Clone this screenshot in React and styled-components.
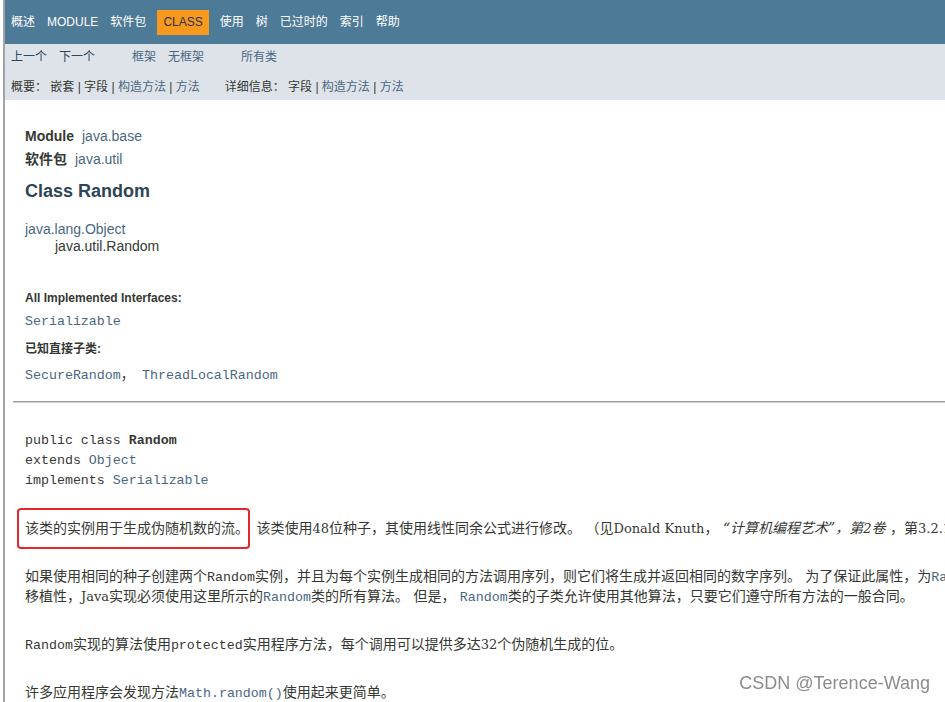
import styled, { createGlobalStyle } from 'styled-components'

const sans = `"Liberation Sans", "Noto Sans CJK SC", sans-serif`
const mono = `"Liberation Mono", "Noto Sans CJK SC", monospace`
const serif = `"DejaVu Serif", "Noto Sans CJK SC", serif`

const GlobalStyle = createGlobalStyle`
  html, body {
    margin: 0;
    padding: 0;
    background: #fff;
    overflow: hidden;
  }
  body {
    font-family: ${sans};
    color: #353833;
  }
`

// Frame + page edge
const Frame = styled.div`
  padding-left: 3px;
  width: 1400px;
  height: 702px;
`

const Page = styled.div`
  border-left: 2px solid #a3a3a3;
  height: 100%;
`

// Top bar
const TopNav = styled.ul`
  display: flex;
  align-items: center;
  margin: 0;
  padding: 10px 0 9px;
  list-style: none;
  background: #4d7a97;
`

const NavItem = styled.li`
  padding: 5px 6px;
  margin: ${p => (p.$active ? '0 5px' : '0')};
  font-size: 12px;
  line-height: 15px;
  color: ${p => (p.$active ? '#253441' : '#fff')};
  background: ${p => (p.$active ? '#f8981d' : 'transparent')};
`

// Sub bar
const SubNav = styled.div`
  background: #dee3e9;
  padding: 5px 0;
  display: flex;
  flex-direction: column;
  gap: 14px;
  font-size: 12px;
  line-height: 16px;
`

const SubRow = styled.div`
  display: flex;
  padding-left: ${p => (p.$inset ? '6px' : '0')};
  gap: ${p => (p.$inset ? '25px' : '0')};
`

const SubGroup = styled.div`
  display: flex;
  margin-right: 25px;
`

const SubLink = styled.span`
  padding: 0 6px;
  color: ${p => (p.$plain ? '#2c4557' : '#4a6782')};
`

const Summary = styled.div`
  white-space: pre;
  color: #353833;
`

const Link = styled.span`
  color: #4a6782;
`

// Content
const Content = styled.div`
  padding: 25px 0 0 8px;
`

const Inner = styled.div`
  padding-left: 12px;
`

const MetaLine = styled.div`
  font-size: 14px;
  line-height: 23px;
  display: flex;
  gap: 8px;
`

const MetaLabel = styled.b`
  color: #353833;
`

const Title = styled.h2`
  margin: 8px 0 0;
  font-size: 18px;
  line-height: 24px;
  color: #2c4557;
`

const Inherit = styled.div`
  margin-top: ${p => (p.$first ? '18px' : '0')};
  padding-left: ${p => (p.$child ? '30px' : '0')};
  font-size: 14px;
  line-height: 17px;
  color: ${p => (p.$child ? '#353833' : '#4a6782')};
`

const Term = styled.div`
  margin-top: ${p => p.$mt}px;
  font-size: 12px;
  font-weight: bold;
  line-height: 16px;
  color: #353833;
`

const Def = styled.div`
  margin-top: ${p => p.$mt}px;
  font-family: ${mono};
  font-size: 13.3px;
  line-height: 16px;
  color: #4a6782;
`

const Comma = styled.span`
  font-family: ${sans};
  color: #353833;
`

const Rule = styled.hr`
  margin: 17px 0 0;
  border: 0;
  border-top: 1px solid #9e9e9e;
  border-bottom: 1px solid #cfcfcf;
  height: 0;
`

const Signature = styled.pre`
  margin: 28px 0 0;
  font-family: ${mono};
  font-size: 13.3px;
  line-height: 20px;
  color: #353833;
`

const Block = styled.div`
  width: 1249px;
  font-family: ${serif};
  font-size: 14px;
  line-height: 20px;
  color: #353833;
`

const Para = styled.p`
  margin: ${p => (p.$first ? '27px' : '28px')} 0 0;
`

const Latin = styled.span`
  font-size: 13px;
  line-height: 1;
`

const Code = styled.code`
  font-family: ${mono};
  font-size: 13.3px;
  line-height: 1;
  color: ${p => (p.$link ? '#4a6782' : '#353833')};
`

const Highlight = styled.span`
  position: relative;
  margin-right: 3px;

  &::after {
    content: '';
    position: absolute;
    top: -12px;
    bottom: -13px;
    left: -8px;
    right: -1px;
    border: 2px solid #e5262b;
    border-radius: 4px;
  }
`

const Watermark = styled.div`
  position: fixed;
  right: 15px;
  bottom: 8px;
  font-family: ${sans};
  font-size: 18px;
  color: #8c8c8c;
  text-shadow: 0 0 2px #fff;
`

const navItems = ['概述', 'MODULE', '软件包', 'CLASS', '使用', '树', '已过时的', '索引', '帮助']

const App = () => {
  return (
    <>
      <GlobalStyle />
      <Frame>
        <Page>
          <TopNav>
            {navItems.map(item => (
              <NavItem key={item} $active={item === 'CLASS'}>
                {item}
              </NavItem>
            ))}
          </TopNav>

          <SubNav>
            <SubRow>
              <SubGroup>
                <SubLink $plain>上一个</SubLink>
                <SubLink $plain>下一个</SubLink>
              </SubGroup>
              <SubGroup>
                <SubLink>框架</SubLink>
                <SubLink>无框架</SubLink>
              </SubGroup>
              <SubGroup>
                <SubLink>所有类</SubLink>
              </SubGroup>
            </SubRow>
            <SubRow $inset>
              <Summary>
                概要： 嵌套 | 字段 | <Link>构造方法</Link> | <Link>方法</Link>
              </Summary>
              <Summary>
                详细信息： 字段 | <Link>构造方法</Link> | <Link>方法</Link>
              </Summary>
            </SubRow>
          </SubNav>

          <Content>
            <Inner>
              <MetaLine>
                <MetaLabel>Module</MetaLabel>
                <Link>java.base</Link>
              </MetaLine>
              <MetaLine>
                <MetaLabel>软件包</MetaLabel>
                <Link>java.util</Link>
              </MetaLine>
              <Title>Class Random</Title>

              <Inherit $first>java.lang.Object</Inherit>
              <Inherit $child>java.util.Random</Inherit>

              <Term $mt={35}>All Implemented Interfaces:</Term>
              <Def $mt={8}>Serializable</Def>
              <Term $mt={11}>已知直接子类:</Term>
              <Def $mt={10}>
                SecureRandom<Comma>，</Comma> ThreadLocalRandom
              </Def>
            </Inner>

            <Rule />

            <Inner>
              <Signature>
                public class <b>Random</b>
                {'\n'}extends <Link>Object</Link>
                {'\n'}implements <Link>Serializable</Link>
              </Signature>

              <Block>
                <Para $first>
                  <Highlight>该类的实例用于生成伪随机数的流。</Highlight> 该类使用<Latin>48</Latin>位种子，其使用线性同余公式进行修改。 （见<Latin>Donald Knuth</Latin>，{' '}
                  <i>“计算机编程艺术”，第<Latin>2</Latin>卷</i> ，第<Latin>3.2.1</Latin>节。）
                </Para>
                <Para>
                  如果使用相同的种子创建两个<Code>Random</Code>实例，并且为每个实例生成相同的方法调用序列，则它们将生成并返回相同的数字序列。 为了保证此属性，为<Code $link>Random</Code>类指定了特定的算法。 为了<Latin>Java</Latin>代码的绝对可移植性，<Latin>Java</Latin>实现必须使用这里所示的<Code $link>Random</Code>类的所有算法。 但是，{' '}
                  <Code $link>Random</Code>类的子类允许使用其他算法，只要它们遵守所有方法的一般合同。
                </Para>
                <Para>
                  <Code>Random</Code>实现的算法使用<Code>protected</Code>实用程序方法，每个调用可以提供多达<Latin>32</Latin>个伪随机生成的位。
                </Para>
                <Para>
                  许多应用程序会发现方法<Code $link>Math.random()</Code>使用起来更简单。
                </Para>
              </Block>
            </Inner>
          </Content>
        </Page>
      </Frame>
      <Watermark>CSDN @Terence-Wang</Watermark>
    </>
  )
}

export default App
